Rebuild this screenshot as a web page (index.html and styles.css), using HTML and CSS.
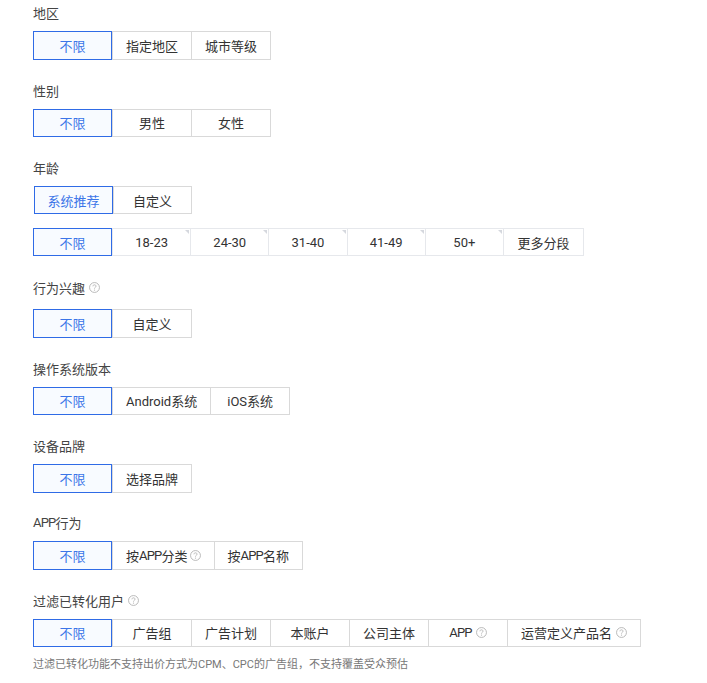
FILE: index.html
```html
<!DOCTYPE html>
<html lang="zh-CN">
  <head>
    <meta charset="UTF-8" />
    <meta name="viewport" content="width=device-width, initial-scale=1.0" />
    <title>定向设置</title>
    <link rel="stylesheet" href="styles.css">
  </head>
  <body>
    <svg class="defs" width="0" height="0">
      <symbol id="help" viewBox="0 0 12 12">
        <circle cx="6" cy="6" r="5.4" fill="none" stroke="currentColor" stroke-width="1" />
        <path d="M4.3 4.7C4.3 3.7 5 3.1 6 3.1S7.7 3.7 7.7 4.6C7.7 5.7 6 5.8 6 7.2" fill="none" stroke="currentColor" stroke-width="1" />
        <circle cx="6" cy="8.8" r="0.7" fill="currentColor" />
      </symbol>
    </svg>

    <div class="group">
      <div class="label">地区</div>
      <div class="options">
        <div class="opt active">不限</div>
        <div class="opt">指定地区</div>
        <div class="opt">城市等级</div>
      </div>
    </div>

    <div class="group">
      <div class="label">性别</div>
      <div class="options">
        <div class="opt active">不限</div>
        <div class="opt">男性</div>
        <div class="opt">女性</div>
      </div>
    </div>

    <div class="group group-age">
      <div class="label">年龄</div>
      <div class="options options-shift">
        <div class="opt active">系统推荐</div>
        <div class="opt">自定义</div>
      </div>
      <div class="options options-age">
        <div class="opt active">不限</div>
        <div class="opt corner">18-23</div>
        <div class="opt corner">24-30</div>
        <div class="opt corner">31-40</div>
        <div class="opt corner">41-49</div>
        <div class="opt corner">50+</div>
        <div class="opt">更多分段</div>
      </div>
    </div>

    <div class="group">
      <div class="label label-gap">行为兴趣<svg class="help help-label"><use href="#help" /></svg></div>
      <div class="options">
        <div class="opt active">不限</div>
        <div class="opt">自定义</div>
      </div>
    </div>

    <div class="group">
      <div class="label">操作系统版本</div>
      <div class="options">
        <div class="opt active">不限</div>
        <div class="opt">Android系统</div>
        <div class="opt">iOS系统</div>
      </div>
    </div>

    <div class="group">
      <div class="label">设备品牌</div>
      <div class="options">
        <div class="opt active">不限</div>
        <div class="opt">选择品牌</div>
      </div>
    </div>

    <div class="group">
      <div class="label"><span class="caps">APP</span>行为</div>
      <div class="options">
        <div class="opt active">不限</div>
        <div class="opt">按<span class="caps">APP</span>分类<svg class="help"><use href="#help" /></svg></div>
        <div class="opt">按<span class="caps">APP</span>名称</div>
      </div>
    </div>

    <div class="group">
      <div class="label">过滤已转化用户<svg class="help help-label"><use href="#help" /></svg></div>
      <div class="options">
        <div class="opt active">不限</div>
        <div class="opt">广告组</div>
        <div class="opt">广告计划</div>
        <div class="opt">本账户</div>
        <div class="opt">公司主体</div>
        <div class="opt"><span class="caps">APP</span><svg class="help help-wide"><use href="#help" /></svg></div>
        <div class="opt">运营定义产品名<svg class="help help-wide"><use href="#help" /></svg></div>
      </div>
      <p class="note">过滤已转化功能不支持出价方式为CPM、CPC的广告组，不支持覆盖受众预估</p>
    </div>
  </body>
</html>
```

FILE: styles.css
```css
body {
  margin: 0;
  padding: 2.8px 0 0 33px;
  background-color: white;
  color: #333;
  font-family: Roboto, "Noto Sans CJK SC", sans-serif;
  font-size: 13px;
}

.defs {
  position: absolute;
}

.group {
  margin-bottom: 20.34px;
}

.group-age {
  margin-bottom: 21.42px;
}

.label {
  display: flex;
  align-items: center;
  height: 20px;
  margin-bottom: 8.5px;
  color: #444;
}

.label-gap {
  margin-bottom: 11.5px;
}

.caps {
  letter-spacing: -0.8px;
}

.options {
  display: flex;
  height: 28.5px;
}

.options-shift {
  margin-left: 1px;
}

.options-shift .opt {
  min-width: 79px;
  padding: 0 12px;
}

.options-age {
  margin-top: 13.5px;
}

.opt {
  position: relative;
  display: flex;
  align-items: center;
  justify-content: center;
  box-sizing: border-box;
  min-width: 80px;
  margin-right: -1px;
  padding: 0 13px;
  border: 1px solid #d9d9d9;
  background-color: white;
  white-space: nowrap;
}

.opt.active {
  z-index: 1;
  min-width: 79px;
  margin-right: 0;
  border-color: #2f6be6;
  background-color: #f8fbff;
  color: #3b75e8;
}

.options-age .opt {
  min-width: 79.2px;
  border-color: #e6e8ec;
}

.options-age .opt:last-child {
  min-width: 81px;
}

.options-age .opt.active {
  min-width: 79px;
  border-color: #2f6be6;
}

.corner::after {
  content: "";
  position: absolute;
  top: 1px;
  right: 1px;
  border-top: 4px solid #d5d8de;
  border-left: 4px solid transparent;
}

.help {
  flex: none;
  width: 11px;
  height: 11px;
  margin-left: 2px;
  color: #b5b5b5;
}

.help-label {
  margin-left: 4px;
}

.help-wide {
  margin-left: 4px;
}

.note {
  margin: 9.5px 0 0;
  color: #777;
  font-size: 11px;
  line-height: 16px;
}
```
